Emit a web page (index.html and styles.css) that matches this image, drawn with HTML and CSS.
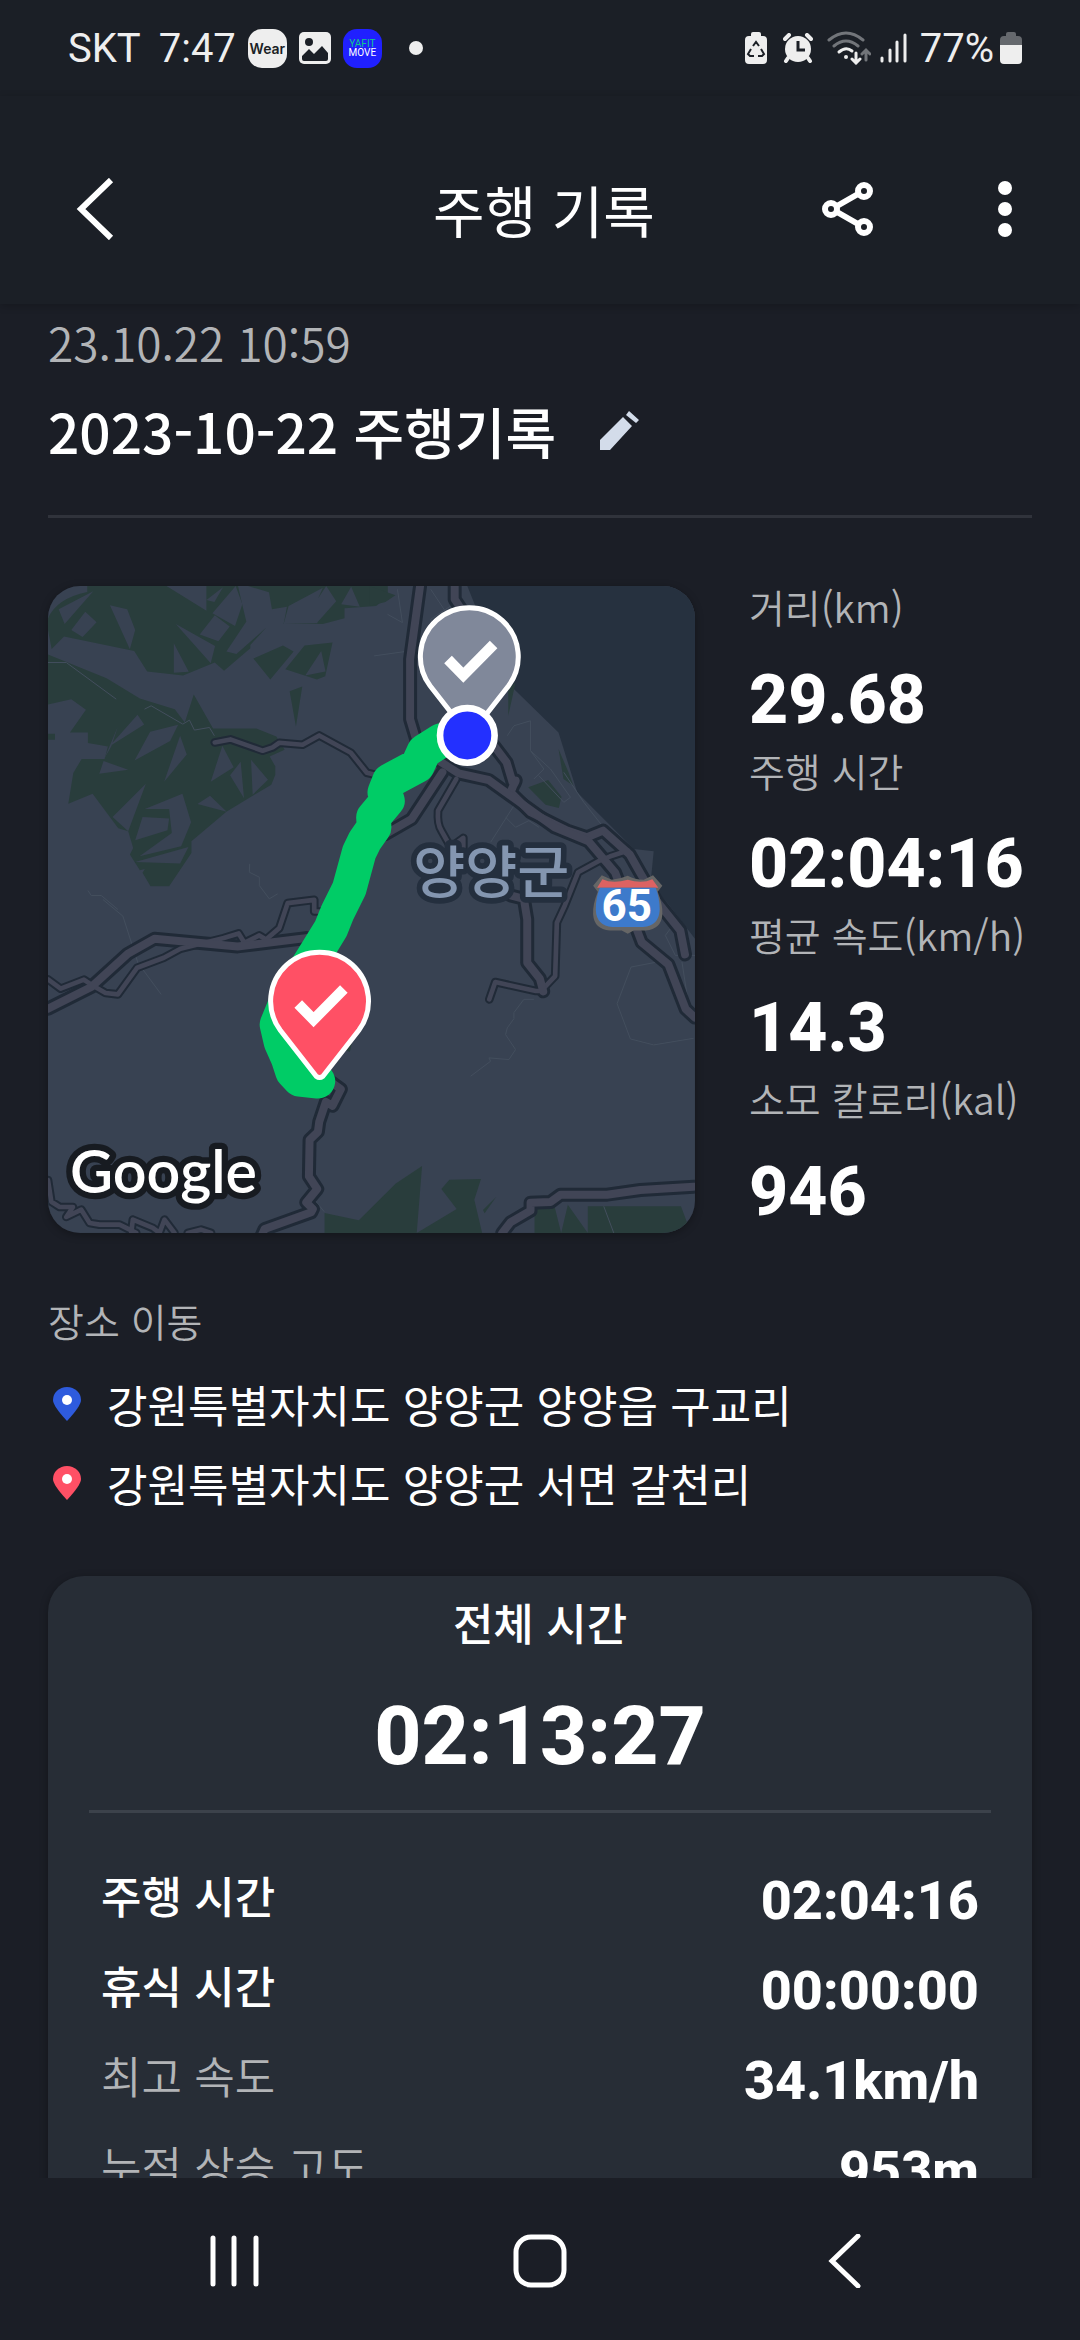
FILE: index.html
```
<!DOCTYPE html>
<html lang="ko">
<head>
    <meta charset="UTF-8">
    <meta name="viewport" content="width=device-width, initial-scale=1.0">
    <title>주행 기록</title>
    <link rel="stylesheet" href="styles.css">
</head>
<body>
    <div class="status-bar">
        <div class="status-left">
            <span class="carrier">SKT</span>
            <span class="clock">7:47</span>
            <span class="app-badge wear">Wear</span>
            <svg class="icon-photo" width="32" height="32" viewBox="0 0 32 32">
                <rect width="32" height="32" rx="5" fill="#eee"/>
                <circle cx="10" cy="10" r="4" fill="#1b1f26"/>
                <path d="M3 24l7-7 5 5 8-8 6 7v6q0 2-2 2H5q-2 0-2-2z" fill="#1b1f26"/>
            </svg>
            <span class="app-badge yafit"><span>YAFIT</span>MOVE</span>
            <span class="more-dot"></span>
        </div>
        <div class="status-right">
            <svg width="22" height="32" viewBox="0 0 22 32">
                <path d="M6 4V2q0-2 2-2h6q2 0 2 2v2h2q4 0 4 4v20q0 4-4 4H4q-4 0-4-4V8q0-4 4-4z" fill="#eee"/>
                <path d="M8 14l3-4 3 4M16 17l3 5-2 2h-4M9 24H5l-2-2 3-5" fill="none" stroke="#1b1f26" stroke-width="2"/>
            </svg>
            <svg class="icon-alarm" width="30" height="30" viewBox="0 0 30 30">
                <circle cx="15" cy="16" r="13" fill="#eee"/>
                <path d="M2 6l4-4M28 6l-4-4M5 25l-2 3M25 25l2 3" stroke="#eee" stroke-width="4" stroke-linecap="round"/>
                <path d="M15 8v9h7" fill="none" stroke="#1b1f26" stroke-width="3"/>
            </svg>
            <svg width="44" height="34" viewBox="0 0 44 34" fill="none" stroke-width="3" stroke-linecap="round">
                <path d="M2 9Q19-5 36 9M7 15Q19 5 31 15" stroke="#72757a"/>
                <path d="M12 21Q19 15 25 20" stroke="#eee"/>
                <circle cx="19" cy="26" r="2" fill="#eee"/>
                <path d="M29 22v10M25 28l4 4 4-4" stroke="#eee"/>
                <path d="M39 29V20M35 23l4-4 4 4" stroke="#72757a"/>
            </svg>
            <svg class="icon-signal" width="27" height="32" viewBox="0 0 27 32" stroke="#eee" stroke-width="3" stroke-linecap="round">
                <path d="M2 26v3M10 18v11M17 10v19M25 3v26"/>
            </svg>
            <span class="battery-text">77%</span>
            <svg width="22" height="32" viewBox="0 0 22 32">
                <path d="M6 4V2q0-2 2-2h6q2 0 2 2v2h2q4 0 4 4v6H0V8q0-4 4-4z" fill="#65686d"/>
                <path d="M0 13h22v15q0 4-4 4H4q-4 0-4-4z" fill="#eee"/>
            </svg>
        </div>
    </div>

    <header class="app-bar">
        <button class="icon-btn back" aria-label="뒤로">
            <svg width="38" height="62" viewBox="0 0 38 62"><path d="M35 2L5 31l30 29" fill="none" stroke="#fff" stroke-width="6"/></svg>
        </button>
        <h1>주행 기록</h1>
        <div class="actions">
            <button class="icon-btn" aria-label="공유">
                <svg width="52" height="56" viewBox="0 0 52 56" fill="none" stroke="#fff" stroke-width="6">
                    <path d="M15 25l21-12M15 31l21 12"/>
                    <circle cx="9" cy="28" r="6"/><circle cx="42" cy="10" r="6"/><circle cx="42" cy="46" r="6"/>
                </svg>
            </button>
            <button class="icon-btn" aria-label="더보기">
                <svg width="14" height="56" viewBox="0 0 14 56" fill="#fff"><circle cx="7" cy="7" r="7"/><circle cx="7" cy="28" r="7"/><circle cx="7" cy="49" r="7"/></svg>
            </button>
        </div>
    </header>

    <main class="content">
        <section class="record-head">
            <p class="date">23.10.22 10:59</p>
            <div class="record-title">
                <h2>2023-10-22 주행기록</h2>
                <button class="icon-btn" aria-label="제목 수정">
                    <svg width="40" height="40" viewBox="0 0 40 40" fill="#d3dcea"><path d="M0 40V30L23 7l9 9L10 40zM26 5l3-4 10 9-3 3z"/></svg>
                </button>
            </div>
        </section>

        <section class="summary">
            <svg class="map" viewBox="0 0 1944 1944" role="img" aria-label="주행 경로 지도">
                <defs>
                    <g id="roads-thin">
                        <path d="M501 470l47-9 97 34 30-10 20-14 70 6 50-28 95 52 48 60 40 10"/>
                        <path d="M0 1182l38 28 70-27 30 20 35 20 37 4 58-80 80-30 50-27 130-32 45-14 17 28 45-22 20 12 40-34 25-75 80-10v35h60"/>
                        <path d="M1227 580l-55 95q-3 40 10 60l28 50 38-28v40"/>
                        <path d="M1486 1217h-20l-122-27-18 52"/>
                        <path d="M1743 795l-55 18-30 12-65 35-40 100-24 52-5 160-38 40"/>
                        <path d="M0 1785l10 65 25 16h40l-20 30 45-22 25 40 30 5h60l50 25M250 1944l5-40 60 25 20 15 15-40 30 40M420 1944l40-10 30 10"/>
                    </g>
                    <g id="roads-main">
                        <path d="M1118 0l-30 220v180l24 80"/>
                        <path d="M1222 0v40l30 45M1340 480l38 50 18 60q18-15 2 10l-8 20 60 60 70 35 40 20 60 20 48-20 80 72 32 56 48 82 72 90 14 72"/>
                        <path d="M1174 525l60 38 90 20 198 142 102 42 80 94 80 210 80 66 52 134 28 26"/>
                        <path d="M1185 560l-92 140-80 46"/>
                        <path d="M0 1270l130-65 110-100 80-45 250 23 205-25"/>
                        <path d="M1390 930l40 10 10 62v130l38 48 10 38"/>
                        <path d="M850 1490l30 22-25 50-20-12-20 60-4 30-25 24-2 110 25 38-33 40 20 20-5 10-140 50-50 110-40 12"/>
                        <path d="M1365 1944l25-32 60-35v-24l60-2 30-22h140l100-14 160-10"/>
                    </g>
                </defs>
                <rect width="1944" height="1944" fill="#384252"/>
                <path d="M1260 0H1944V1060L1860 950 1810 900 1820 797 1760 790 1590 620 1534 440 1390 300 1300 100z" fill="#26313f"/>

                <g class="forest" transform="translate(-24 -48)">
                    <path d="M24 145Q50 85 142 66V48H595L608 105 620 155 560 245 590 252 680 173 632 225V235L553 303 525 278 430 317 322 305 283 243 72 200 35 237 24 180z"/>
                    <path d="M24 254L200 325 300 386 405 418 435 458 462 374 520 476H650L710 500 735 540 690 560 707 590V615L695 645 560 726 455 815V850L388 950H332L308 910 315 898 300 902 270 855 280 835 265 785 235 776 158 672 85 702 100 610 125 568H194L204 530 144 520V488H90L138 420 94 388 24 404z"/>
                    <path d="M625 48H1045V80L1010 108 915 115V145L850 162H732L742 110 697 118 688 67z"/>
                    <path d="M641 266l89-39 32 18-70 84zM737 298l58-71 84-9-22 101-25 10zM750 364l38-14-19 120zM24 492h21v18H24z"/>
                </g>
                <g class="clearing" transform="translate(-24 -48)">
                    <path d="M380 48h120v74zM500 90l50-38-26 44zM518 130l70-82 20 55-22 65zM480 194l45-58 45 34-34 44zM408 162l118 66-13 52zM402 220l45 86-45 3zM56 118l104-54-86 98zM94 180l42-55 34 32-42 44zM210 106l52 12 24 62-16 58z"/>
                    <path d="M747 108l103-55-22 49 6 58-102 2zM860 48l30 46-57 64-6-60zM935 50l26 60-56-7zM797 317l48-74 13 62z"/>
                    <path d="M284 572l47-86 84-21-24 49zM208 530l85-95 20 29zM194 565l40-95-20 60zM178 612l13-38 74 26zM373 636l48-138 20 56zM513 636l35-108 34 65zM571 617l32-41 10 110zM634 570l51 60-46 45zM473 703l38-25 50 48zM218 742l100-100-53 143zM315 718l113-46 26 86-30 72-125 30 97-70-8-72zM286 812l22-70 80 5-5 35zM286 877l160-45-25 50z"/>
                </g>
                <g class="forest">
                    <path d="M831 1944v-60l103 22 110-110 80-53-16 201zM1108 1944l120-72-46-60 24-28 95-2-20 62 24 102zM1462 1944v-80h60l20 80 20-85 60 85v-80h280l30 80zM1307 1875l40-40-35 50z"/>
                    <path d="M966 0l78 28-30 20-48 12zM1443 605l60-22 40 50-8 34-40-10zM1534 490l30 70 15 40-30-20zM1383 390v-80l22-20zM895 1395l20-30-8 35z"/>
                </g>
                <g class="trails">
                    <path d="M0 230h55l150 110M290 370l20-10 95 55 20-12 15 30 45-8 15 25M606 835l-1 25 30 15v25l30 40 25-15M120 915l10 15h30l50 42M165 942l60 50 45 140 70 95M780 1820l50 60"/>
                    <path d="M1050 10l15 100-45-25M1150 10l60 90-80 60M1240 40l-90 60 50 90M980 210l100-14M1380 450l20-30 50-15v90l60 55 60 85-20 15-75-80M1450 495l40 55-30 30M1550 560l60 90 110 140M1330 770l70-110M1375 695l30 30 40-20 30 20"/>
                    <path d="M1460 1242h-30l-30 40v18l-20 28-5 20 30 45-20 30-60-5 5 10-60 45M1830 1130l-78 15-42 110 40 106 70 18 120-20M1870 1030l-15 20 30 60h59M1905 1130l20 130M1670 1864l30 80"/>
                </g>

                <use href="#roads-thin" class="casing-thin"/>
                <use href="#roads-main" class="casing-main"/>
                <use href="#roads-thin" class="road-thin"/>
                <use href="#roads-main" class="road-main"/>

                <path class="route" d="M1240 449L1180 465 1130 497 1110 540 1026 585 1012 620 1020 645 978 695 980 725 952 765 935 800 905 910 870 980 850 1030 812 1092 720 1240 688 1318 700 1370 722 1420 735 1460 756 1482 811 1488"/>

                <text class="town" x="1332" y="922">양양군</text>
                <g transform="translate(1742 867)">
                    <path d="M-78 2l30 14q25-2 48-12 22 12 48 12l28-14 28 32-14 18q16 40 14 68-3 44-50 48h-36L0 178l-18-10h-36q-47-4-50-48-2-28 14-68l-14-18z" fill="#666"/>
                    <path d="M-76 14q30 14 76 2 44 12 74-2l18 26H-92z" fill="#dc6262"/>
                    <path d="M-84 40H84q12 30 12 66-2 48-50 52H-46q-48-4-50-52 0-36 12-66z" fill="#3d7acb"/>
                    <text class="shield" x="-3" y="140">65</text>
                </g>

                <g class="pin" transform="translate(1266 212)">
                    <path fill="#80889a" d="M-118 88A147 147 0 1 1 118 88L10 226Q0 234-10 226z"/>
                    <path class="check" d="M-64 9L-18 56 73-36"/>
                </g>
                <circle cx="1260" cy="449" r="82" fill="#2330ff" stroke="#fff" stroke-width="20"/>
                <g class="pin" transform="translate(816 1247)">
                    <path fill="#ff5065" d="M-118 88A147 147 0 1 1 118 88L10 226Q0 234-10 226z"/>
                    <path class="check" d="M-64 9L-18 56 73-36"/>
                </g>
                <text class="google" x="66" y="1824">Google</text>
            </svg>

            <dl class="stats">
                <dt>거리(km)</dt>
                <dd>29.68</dd>
                <dt>주행 시간</dt>
                <dd>02:04:16</dd>
                <dt>평균 속도(km/h)</dt>
                <dd>14.3</dd>
                <dt>소모 칼로리(kal)</dt>
                <dd>946</dd>
            </dl>
        </section>

        <section class="places">
            <h3>장소 이동</h3>
            <ul>
                <li>
                    <svg width="28" height="34" viewBox="0 0 28 34"><path d="M14 34Q0 19 0 13a14 13 0 0 1 28 0q0 6-14 21z" fill="#2e5bdd"/><circle cx="14" cy="13" r="5" fill="#fff"/></svg>
                    강원특별자치도 양양군 양양읍 구교리
                </li>
                <li>
                    <svg width="28" height="34" viewBox="0 0 28 34"><path d="M14 34Q0 19 0 13a14 13 0 0 1 28 0q0 6-14 21z" fill="#ff5065"/><circle cx="14" cy="13" r="5" fill="#fff"/></svg>
                    강원특별자치도 양양군 서면 갈천리
                </li>
            </ul>
        </section>

        <section class="time-card">
            <h3>전체 시간</h3>
            <p class="total">02:13:27</p>
            <dl class="details">
                <div class="row"><dt>주행 시간</dt><dd>02:04:16</dd></div>
                <div class="row"><dt>휴식 시간</dt><dd>00:00:00</dd></div>
                <div class="row sub"><dt>최고 속도</dt><dd>34.1km/h</dd></div>
                <div class="row sub"><dt>누적 상승 고도</dt><dd>953m</dd></div>
            </dl>
        </section>
    </main>

    <nav class="nav-bar">
        <button class="icon-btn" aria-label="최근 앱">
            <svg width="54" height="54" viewBox="0 0 54 54" stroke="#fff" stroke-width="5" stroke-linecap="round"><path d="M5 4v46M26 4v46M48 4v46"/></svg>
        </button>
        <button class="icon-btn" aria-label="홈">
            <svg width="54" height="54" viewBox="0 0 54 54"><rect x="3" y="3" width="48" height="48" rx="15" fill="none" stroke="#fff" stroke-width="5"/></svg>
        </button>
        <button class="icon-btn" aria-label="이전">
            <svg width="54" height="54" viewBox="0 0 54 54"><path d="M40 2L14 27l26 25" fill="none" stroke="#fff" stroke-width="5" stroke-linecap="round"/></svg>
        </button>
    </nav>
</body>
</html>
```
FILE: styles.css
```
* {
    box-sizing: border-box;
}
body {
    display: flex;
    flex-direction: column;
    height: 100vh;
    margin: 0;
    background-color: #1b1e26;
    color: #fff;
    font-family: "Noto Sans CJK KR", sans-serif;
}
h1, h2, h3, p, ul, dl, dd {
    margin: 0;
    padding: 0;
}
svg {
    display: block;
    flex-shrink: 0;
}
.icon-btn {
    padding: 0;
    border: none;
    background: none;
    cursor: pointer;
}

/* status bar */
.status-bar {
    display: flex;
    justify-content: space-between;
    align-items: center;
    height: 96px;
    padding: 0 58px 0 68px;
    background-color: #1b1f26;
    color: #eee;
    font-family: Roboto, sans-serif;
    font-size: 40px;
}
.status-left, .status-right {
    display: flex;
    align-items: center;
}
.clock {
    margin: 0 12px 0 18px;
}
.app-badge {
    display: flex;
    flex-direction: column;
    align-items: center;
    justify-content: center;
    width: 39px;
    height: 39px;
    border-radius: 14px;
    line-height: 9px;
}
.wear {
    background-color: #eee;
    color: #1b1f26;
    font-family: Inter, sans-serif;
    font-size: 14px;
    font-weight: 600;
}
.yafit {
    background-color: #2020ff;
    color: #fff;
    font-size: 10px;
}
.yafit span {
    color: #10c98a;
}
.icon-photo {
    margin: 0 12px;
}
.more-dot {
    width: 14px;
    height: 14px;
    margin-left: 27px;
    border-radius: 50%;
    background-color: #eee;
}
.icon-alarm {
    margin: 0 14px 0 16px;
}
.icon-signal {
    margin-left: 9px;
}
.battery-text {
    margin: 0 6px 0 13px;
}

/* app bar */
.app-bar {
    display: grid;
    grid-template-columns: 1fr auto 1fr;
    align-items: center;
    height: 208px;
    padding: 18px 68px 0 76px;
    flex-shrink: 0;
    background-color: #1b1f26;
    box-shadow: 0 2px 8px rgba(0, 0, 0, 0.2);
    z-index: 1;
}
.back {
    justify-self: start;
}
.app-bar h1 {
    font-size: 56px;
    font-weight: 400;
    line-height: 80px;
}
.actions {
    display: flex;
    justify-content: flex-end;
    gap: 124px;
}

.content {
    flex: 1;
    min-height: 0;
    overflow: hidden;
    padding: 12px 48px 0;
}
.record-head {
    padding-bottom: 49px;
    border-bottom: 3px solid #30333b;
}
.date {
    color: #b2b4b7;
    font-size: 46px;
    font-weight: 350;
    line-height: 52px;
}
.record-title {
    display: flex;
    align-items: center;
    gap: 44px;
    margin-top: 26px;
}
.record-title h2 {
    font-size: 55px;
    font-weight: 500;
    line-height: 72px;
}

/* map and numbers */
.summary {
    display: grid;
    grid-template-columns: minmax(0, 16fr) minmax(0, 7fr);
    gap: 54px;
    margin-top: 68px;
}
.map {
    width: 100%;
    border-radius: 32px;
    box-shadow: 0 2px 8px rgba(0, 0, 0, 0.3);
}
.forest {
    fill: #293d3c;
}
.clearing {
    fill: #384252;
}
.trails {
    fill: none;
    stroke: #434e5d;
    stroke-width: 3;
}
.casing-thin, .casing-main, .road-thin, .road-main {
    fill: none;
    stroke-linejoin: round;
    stroke-linecap: round;
}
.casing-thin {
    stroke: #202a37;
    stroke-width: 26;
}
.casing-main {
    stroke: #202a37;
    stroke-width: 42;
}
.road-thin {
    stroke: #414556;
    stroke-width: 14;
}
.road-main {
    stroke: #414556;
    stroke-width: 24;
}
.route {
    fill: none;
    stroke: #00cc66;
    stroke-width: 104;
    stroke-linecap: round;
    stroke-linejoin: round;
}
.pin {
    stroke: #fff;
    stroke-width: 15;
}
.pin .check {
    fill: none;
    stroke-width: 32;
}
.town, .google {
    paint-order: stroke;
    stroke-linejoin: round;
}
.town {
    fill: #8496b0;
    stroke: #242f3e;
    stroke-width: 34;
    font-size: 170px;
    font-weight: 500;
    text-anchor: middle;
}
.google {
    fill: #fff;
    stroke: #171b21;
    stroke-width: 38;
    font-family: Lato, sans-serif;
    font-size: 178px;
    font-weight: 600;
}
.shield {
    fill: #fff;
    font-family: Roboto, sans-serif;
    font-size: 132px;
    font-weight: 700;
    text-anchor: middle;
}
.stats dt {
    color: #b2b4b7;
    font-size: 39px;
    font-weight: 350;
    line-height: 40px;
    white-space: nowrap;
}
.stats dd {
    margin: 38px 0 14px;
    font-family: Roboto, sans-serif;
    font-size: 68px;
    font-weight: 800;
    line-height: 72px;
}
.stats dd:last-child {
    margin-bottom: 0;
}

/* places */
.places {
    margin-top: 63px;
}
.places h3 {
    color: #b2b4b7;
    font-size: 39px;
    font-weight: 350;
    line-height: 48px;
}
.places ul {
    display: flex;
    flex-direction: column;
    gap: 19px;
    margin-top: 30px;
    list-style: none;
}
.places li {
    display: flex;
    align-items: center;
    gap: 26px;
    padding-left: 5px;
    font-size: 44px;
    font-weight: 400;
    line-height: 60px;
}

/* total time card */
.time-card {
    margin-top: 63px;
    padding: 18px 41px 40px;
    border-radius: 36px;
    background-color: #272d36;
    box-shadow: 0 2px 8px rgba(0, 0, 0, 0.3);
    text-align: center;
}
.time-card h3 {
    font-size: 44px;
    font-weight: 500;
    line-height: 56px;
}
.total {
    margin: 38px 0 26px;
    font-family: Roboto, sans-serif;
    font-size: 82px;
    font-weight: 800;
    line-height: 96px;
}
.details {
    display: flex;
    flex-direction: column;
    gap: 18px;
    padding: 52px 12px 0;
    border-top: 3px solid #3c424b;
}
.row {
    display: flex;
    justify-content: space-between;
    font-size: 44px;
    font-weight: 500;
    line-height: 60px;
}
.row dd {
    font-family: Roboto, sans-serif;
    font-size: 54px;
    font-weight: 800;
    line-height: 72px;
}
.sub dt {
    color: #b2b4b7;
    font-weight: 350;
}

/* system navigation */
.nav-bar {
    display: flex;
    justify-content: space-around;
    align-items: center;
    flex-shrink: 0;
    height: 162px;
    padding: 4px 82px 0;
    background-color: #1b1e26;
}
```
